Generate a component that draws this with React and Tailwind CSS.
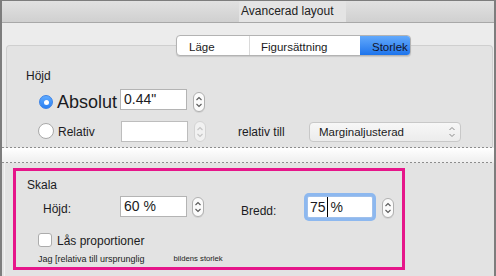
import React from "react";

function Stepper({ disabled, className = "" }) {
  const stroke = disabled ? "#c4c4c4" : "#5a5a5a";
  return (
    <div
      className={
        (disabled
          ? "border-[#d4d4d4] bg-[#f1f1f1] "
          : "border-[#b0b0b0] bg-[#fbfbfb] shadow-[0_1px_0_rgba(0,0,0,0.08)] ") +
        "w-[12px] rounded-[6px] border flex items-center justify-center shrink-0 " +
        className
      }
    >
      <svg width="8" height="16" viewBox="0 0 8 16" fill="none">
        <path d="M1.5 6 L4 3.5 L6.5 6" stroke={stroke} strokeWidth="1.1" />
        <path d="M1.5 10 L4 12.5 L6.5 10" stroke={stroke} strokeWidth="1.1" />
      </svg>
    </div>
  );
}

function Dashed() {
  return (
    <div className="h-[1px] w-full shrink-0 bg-[linear-gradient(to_right,#8c8c8c_50%,transparent_50%)] bg-[length:4px_1px]" />
  );
}

export default function App() {
  return (
    <div className="w-[496px] h-[276px] overflow-hidden bg-[#ececec] border-x-2 border-t border-[#7d7d7d] flex flex-col [font-family:'Liberation_Sans',Arial,sans-serif] text-[#1b1b22]">
      {/* Title bar */}
      <div className="h-[22px] shrink-0 bg-gradient-to-b from-[#e1e1e1] to-[#d0d0d0] border-b border-[#a8a8a8] flex">
        <div className="ml-[237px] w-[107px] bg-[#e4e4e4] pl-[2px] text-[12px] leading-[21px] text-[#222]">
          Avancerad layout
        </div>
      </div>

      {/* Top section */}
      <div className="h-[124px] shrink-0 flex flex-col">
        <div className="mt-[12px] ml-[174px] relative z-10 flex h-[21px] w-[235px] rounded-[4px] border border-[#b3b3b3] bg-white overflow-hidden shadow-[0_1px_1px_rgba(0,0,0,0.12)] text-[11.5px] leading-[19px]">
          <div className="w-[73px] pl-[12px] pt-[2px] border-r border-[#dadada]">Läge</div>
          <div className="w-[110px] pl-[11px] pt-[2px]">Figursättning</div>
          <div className="flex-1 pl-[12px] pt-[2px] bg-gradient-to-b from-[#62a9fb] to-[#1c74ec] text-[#14142a]">
            Storlek
          </div>
        </div>

        <div className="-mt-[11px] ml-[4px] mr-[1px] flex-1 border-t border-x border-[#cfcfcf] rounded-t-[4px] bg-[#e3e3e3] flex flex-col">
          <div className="pl-[19px] pt-[23px] text-[12px] leading-[14px]">Höjd</div>

          {/* Absolut row */}
          <div className="mt-[6px] pl-[32px] flex items-start h-[23px]">
            <div className="mt-[6px] w-[14px] h-[14px] rounded-full bg-gradient-to-b from-[#5eaaff] to-[#2a80f2] border border-[#3b82e6] flex items-center justify-center shrink-0">
              <div className="w-[5px] h-[5px] rounded-full bg-white" />
            </div>
            <div className="ml-[4px] w-[63px] text-[18px] leading-[22px] mt-[2px]">Absolut</div>
            <div className="w-[67px] h-[21px] bg-white border border-[#b4b4b4] pl-[3px] text-[14px] leading-[19px] shrink-0">
              0.44"
            </div>
            <Stepper className="ml-[6px] mt-[3px] h-[20px]" />
          </div>

          {/* Relativ row */}
          <div className="mt-[9px] pl-[31px] flex items-start">
            <div className="mt-[2px] w-[16px] h-[16px] rounded-full bg-white border border-[#a9a9a9] shrink-0" />
            <div className="ml-[4px] w-[63px] mt-[4px] text-[12px] leading-[14px]">Relativ</div>
            <div className="w-[67px] h-[21px] bg-white border border-[#bdbdbd] shrink-0" />
            <Stepper disabled className="ml-[6px] h-[21px]" />
            <div className="ml-[32px] w-[71px] mt-[4px] text-[12px] leading-[14px]">relativ till</div>
            <div className="mt-[1px] w-[152px] h-[20px] rounded-[4px] border border-[#c8c8c8] bg-gradient-to-b from-[#f7f7f7] to-[#ececec] flex items-center pl-[9px] pr-[4px] text-[11.5px] shrink-0">
              <span className="flex-1 pt-[1px]">Marginaljusterad</span>
              <svg width="8" height="14" viewBox="0 0 8 14" fill="none">
                <path d="M1.5 5 L4 2.5 L6.5 5" stroke="#8a8a8a" strokeWidth="1" />
                <path d="M1.5 9 L4 11.5 L6.5 9" stroke="#8a8a8a" strokeWidth="1" />
              </svg>
            </div>
          </div>
        </div>
      </div>

      {/* Separator */}
      <Dashed />
      <div className="h-[14px] shrink-0 bg-gradient-to-b from-white to-[#efefef]" />
      <Dashed />

      {/* Bottom section */}
      <div className="flex-1 bg-[#e3e3e3] flex">
        <div className="ml-[2px] border-l border-[#f1f1f1] flex-1">
          <div className="ml-[8px] mt-[5px] w-[392px] h-[102px] border-[3px] border-[#e6168a] flex flex-col">
            <div className="pl-[11px] pt-[7px] text-[12px] leading-[14px]">Skala</div>

            {/* Höjd / Bredd row */}
            <div className="mt-[4px] pl-[27px] flex items-start">
              <div className="w-[77px] mt-[6px] text-[12px] leading-[14px]">Höjd:</div>
              <div className="w-[67px] h-[21px] bg-white border border-[#b4b4b4] pl-[3px] text-[14px] leading-[19px] shrink-0">
                60 %
              </div>
              <Stepper className="ml-[5px] mt-[1px] h-[20px]" />
              <div className="ml-[37px] w-[66px] mt-[8px] text-[12px] leading-[14px]">Bredd:</div>
              <div className="w-[66px] h-[22px] bg-white border border-[#9fc0ec] rounded-[2px] shadow-[0_0_0_3px_#8db8ef] pl-[2px] text-[14px] flex items-center shrink-0">
                <span>75</span>
                <span className="w-[1px] h-[20px] bg-black ml-[1px]" />
                <span className="ml-[3px]">%</span>
              </div>
              <Stepper className="ml-[9px] mt-[2px] h-[20px]" />
            </div>

            {/* Lås proportioner */}
            <div className="mt-[15px] pl-[22px] flex items-start">
              <div className="w-[14px] h-[14px] rounded-[3px] bg-white border border-[#acacac] shrink-0" />
              <div className="ml-[5px] mt-[1px] text-[12px] leading-[14px]">Lås proportioner</div>
            </div>

            <div className="mt-[5px] pl-[22px] flex items-center h-[12px]">
              <span className="text-[9px] leading-[12px]">Jag [relativa till ursprunglig</span>
              <span className="ml-[29px] text-[7.7px] leading-[12px]">bildens storlek</span>
            </div>
          </div>
        </div>
      </div>
    </div>
  );
}
